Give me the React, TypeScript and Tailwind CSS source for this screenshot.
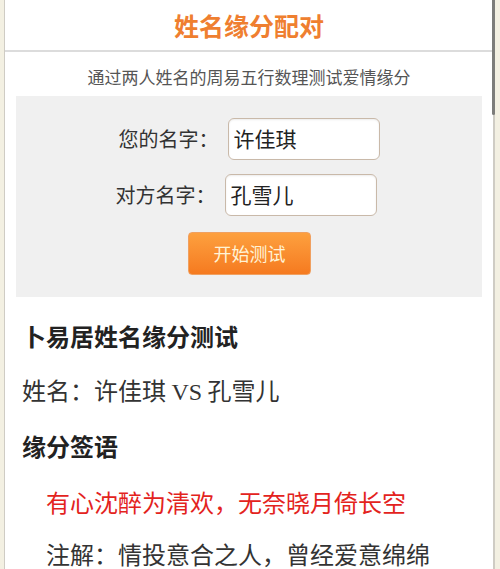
import React from "react"

const cjk = "font-['Noto_Sans_CJK_SC','Noto_Sans',sans-serif]"

function NameRow({ label, value }: { label: string; value: string }) {
  return (
    <div className="flex items-center justify-center gap-[9px]">
      <span className="text-[20px] text-[#333]">{label}</span>
      <div className="w-[152px] h-[42px] rounded-[6px] border border-[#c9b9a9] bg-white flex items-center px-[5px] shadow-[inset_0_1px_2px_rgba(0,0,0,0.08)]">
        <span className="text-[21px] text-[#222]">{value}</span>
      </div>
    </div>
  )
}

export default function App() {
  return (
    <div className={`relative w-[500px] h-[569px] overflow-hidden bg-[#f3f0e2] ${cjk}`}>
      <div className="h-full ml-[4px] mr-[5px] bg-white border-l border-r-2 border-[#cfccc4]">
        {/* header */}
        <div className="h-[52px] flex items-center justify-center border-b-2 border-[#dcdcdc]">
          <h1 className="text-[25px] font-bold text-[#ef7f30] leading-none">姓名缘分配对</h1>
        </div>

        <p className="text-center text-[17px] text-[#555] mt-[13px] leading-[24px]">
          通过两人姓名的周易五行数理测试爱情缘分
        </p>

        {/* form */}
        <div className="mx-[11px] mt-[7px] h-[201px] bg-[#f0f0f0] pt-[22px] flex flex-col">
          <NameRow label="您的名字：" value="许佳琪" />
          <div className="mt-[14px] -ml-[6px]">
            <NameRow label="对方名字：" value="孔雪儿" />
          </div>
          <div className="flex justify-center mt-[16px]">
            <button className="w-[123px] h-[43px] rounded-[4px] bg-gradient-to-b from-[#fda03e] to-[#f57a1f] border border-[#f0a060] text-[18px] text-[#fff3d6] ml-[1px]">
              开始测试
            </button>
          </div>
        </div>

        {/* result */}
        <div className="pl-[17px] pt-[12px] text-[24px] leading-[54px]">
          <h2 className="font-bold text-[#222]">卜易居姓名缘分测试</h2>
          <p className="text-[#333]">
            姓名：许佳琪 <span className="font-['Liberation_Serif',serif]">VS</span> 孔雪儿
          </p>
          <h2 className="font-bold text-[#222]">缘分签语</h2>
          <p className="pl-[24px] text-[#e3231d] mt-[2px]">有心沈醉为清欢，无奈晓月倚长空</p>
          <p className="pl-[24px] text-[#333] mt-[12px] leading-[26px]">注解：情投意合之人，曾经爱意绵绵</p>
        </div>
      </div>

      {/* scroll thumb */}
      <div className="absolute top-0 right-[5px] w-[3px] h-[115px] bg-[#7d7d7a] rounded-b-sm" />
    </div>
  )
}
